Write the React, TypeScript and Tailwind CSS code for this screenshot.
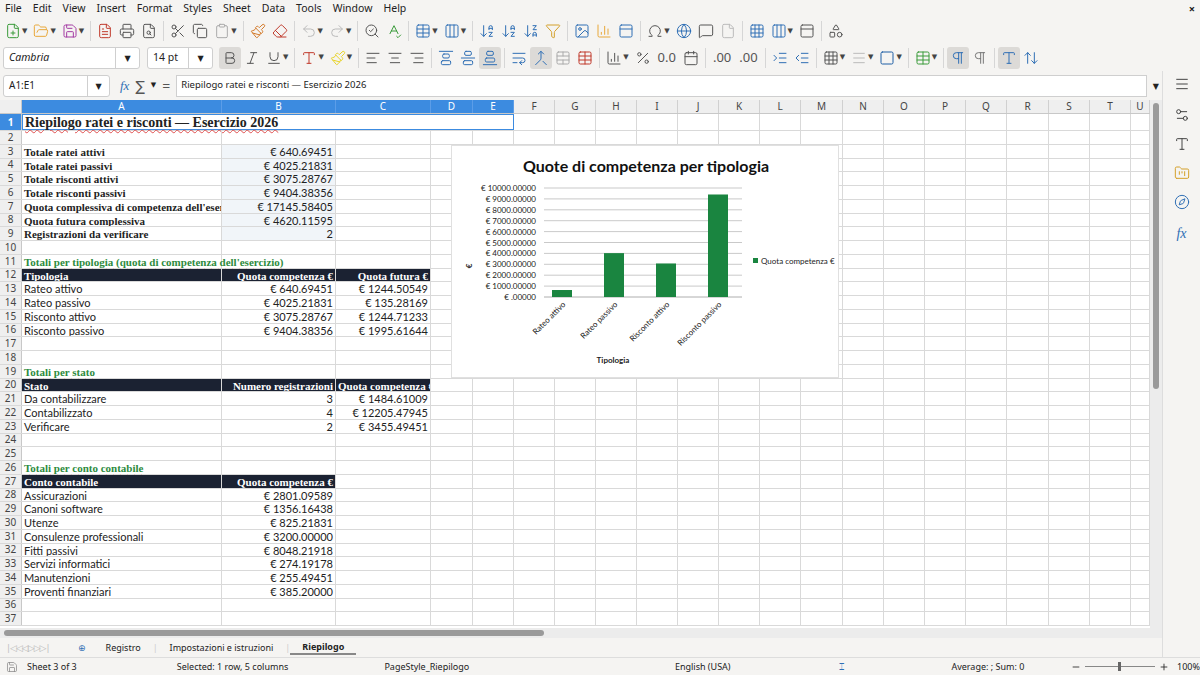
import React from "react";
import {
  FilePlus, FolderOpen, Save, FileText, Printer, FileSearch, Scissors, Copy, Clipboard, Paintbrush, Eraser,
  Undo2, Redo2, SearchCheck, SpellCheck, Table, Columns3, ArrowDownAZ, ArrowDownZA, Filter, Image, BarChart3,
  Omega, Globe, MessageSquare, File, Grid3x3, PanelTop, Shapes, Bold, Italic, Underline,
  AlignLeft, AlignCenter, AlignRight, AlignVerticalJustifyStart, AlignVerticalJustifyCenter, AlignVerticalJustifyEnd,
  WrapText, Merge, TableCellsMerge, Percent, Calendar, IndentIncrease, IndentDecrease, Square, Menu, Settings2,
  Type, FolderKanban, Compass, Minus, Plus, Pilcrow, ArrowUpDown,
} from "lucide-react";

const cols = [
  ["A", 200], ["B", 114], ["C", 95], ["D", 42], ["E", 41], ["F", 41], ["G", 41], ["H", 41], ["I", 41], ["J", 41],
  ["K", 41], ["L", 41], ["M", 42], ["N", 41], ["O", 41], ["P", 41], ["Q", 41], ["R", 42], ["S", 41], ["T", 41], ["U", 19],
] as const;

type Row = { a?: string; b?: string; c?: string; kind?: "label" | "green" | "head" | "data"; span?: number };

const rows: Record<number, Row> = {
  3: { a: "Totale ratei attivi", b: "€ 640.69451", kind: "label" },
  4: { a: "Totale ratei passivi", b: "€ 4025.21831", kind: "label" },
  5: { a: "Totale risconti attivi", b: "€ 3075.28767", kind: "label" },
  6: { a: "Totale risconti passivi", b: "€ 9404.38356", kind: "label" },
  7: { a: "Quota complessiva di competenza dell'esercizio", b: "€ 17145.58405", kind: "label" },
  8: { a: "Quota futura complessiva", b: "€ 4620.11595", kind: "label" },
  9: { a: "Registrazioni da verificare", b: "2", kind: "label" },
  11: { a: "Totali per tipologia (quota di competenza dell'esercizio)", kind: "green" },
  12: { a: "Tipologia", b: "Quota competenza €", c: "Quota futura €", kind: "head", span: 3 },
  13: { a: "Rateo attivo", b: "€ 640.69451", c: "€ 1244.50549", kind: "data" },
  14: { a: "Rateo passivo", b: "€ 4025.21831", c: "€ 135.28169", kind: "data" },
  15: { a: "Risconto attivo", b: "€ 3075.28767", c: "€ 1244.71233", kind: "data" },
  16: { a: "Risconto passivo", b: "€ 9404.38356", c: "€ 1995.61644", kind: "data" },
  19: { a: "Totali per stato", kind: "green" },
  20: { a: "Stato", b: "Numero registrazioni", c: "Quota competenza €", kind: "head", span: 3 },
  21: { a: "Da contabilizzare", b: "3", c: "€ 1484.61009", kind: "data" },
  22: { a: "Contabilizzato", b: "4", c: "€ 12205.47945", kind: "data" },
  23: { a: "Verificare", b: "2", c: "€ 3455.49451", kind: "data" },
  26: { a: "Totali per conto contabile", kind: "green" },
  27: { a: "Conto contabile", b: "Quota competenza €", kind: "head", span: 2 },
  28: { a: "Assicurazioni", b: "€ 2801.09589", kind: "data" },
  29: { a: "Canoni software", b: "€ 1356.16438", kind: "data" },
  30: { a: "Utenze", b: "€ 825.21831", kind: "data" },
  31: { a: "Consulenze professionali", b: "€ 3200.00000", kind: "data" },
  32: { a: "Fitti passivi", b: "€ 8048.21918", kind: "data" },
  33: { a: "Servizi informatici", b: "€ 274.19178", kind: "data" },
  34: { a: "Manutenzioni", b: "€ 255.49451", kind: "data" },
  35: { a: "Proventi finanziari", b: "€ 385.20000", kind: "data" },
};

const serif = { fontFamily: "'Liberation Serif', serif" };
const sans = { fontFamily: "Lato, 'Liberation Sans', sans-serif" };
const ui = { fontFamily: "'Noto Sans', 'DejaVu Sans', sans-serif" };
const wavy = "underline decoration-wavy decoration-[#e05050] decoration-[0.5px] underline-offset-[2px]";

function I({ icon: C, c = "text-[#555]", dd }: { icon: any; c?: string; dd?: boolean }) {
  return (
    <span className="flex items-center gap-[1px] px-[3px]">
      <C size={16} strokeWidth={1.5} className={c} />
      {dd && <span className="text-[7px] text-[#444]">▼</span>}
    </span>
  );
}
const Sep = () => <span className="mx-[3px] h-[20px] w-px bg-[#d6d6d6]" />;

function Cell({ w, children, right, cls = "" }: { w: number; children?: React.ReactNode; right?: boolean; cls?: string }) {
  return (
    <div
      className={`h-full shrink-0 overflow-hidden whitespace-nowrap border-r border-[#d9d9d9] px-[2px] leading-[13px] ${right ? "text-right" : ""} ${cls}`}
      style={{ width: w }}
    >
      {children}
    </div>
  );
}

function SheetRow({ n }: { n: number }) {
  const r = rows[n];
  const h = n === 1 ? 17 : 13.75;
  const kind = r?.kind;
  const headBg = (i: number) => (kind === "head" && i < (r?.span ?? 0) ? "bg-[#1b2232] text-white font-bold" : "");
  const aCls =
    kind === "label" ? `font-bold text-[#222] ${wavy}` :
    kind === "green" ? `font-bold text-[#2e8b3e] overflow-visible ${wavy}` :
    kind === "data" ? `text-[#222] ${wavy}` : "";
  return (
    <div className="flex shrink-0 border-b border-[#d9d9d9] text-[11px]" style={{ height: h }}>
      <div className={`flex w-[22px] shrink-0 items-center justify-center border-r border-[#c8c8c8] text-[10px] ${n === 1 ? "bg-[#3c8be0] font-bold text-white" : "bg-[#efefef] text-[#444]"}`} style={ui}>
        {n}
      </div>
      {n === 1 ? (
        <div className={`h-full shrink-0 border-[1.5px] border-[#3c8be0] px-[2px] text-[14px] font-bold leading-[15px] text-[#222] ${wavy}`} style={{ ...serif, width: 492 }}>
          Riepilogo ratei e risconti — Esercizio 2026
        </div>
      ) : (
        <>
          <Cell w={200} cls={`${aCls} ${headBg(0)}`}><span style={kind === "data" ? sans : serif}>{r?.a}</span></Cell>
          <Cell w={114} right cls={`${kind === "label" ? "bg-[#f1f5f9]" : ""} ${headBg(1)} ${kind === "head" ? "text-left" : ""}`}><span style={kind === "head" ? serif : sans}>{r?.b}</span></Cell>
          <Cell w={95} right cls={`${headBg(2)} ${kind === "head" ? "text-left" : ""}`}><span style={kind === "head" ? serif : sans}>{r?.c}</span></Cell>
          <Cell w={42} />
          <Cell w={41} />
        </>
      )}
      {cols.slice(5).map(([k, w]) => <Cell key={k} w={w} />)}
    </div>
  );
}

function Chart() {
  const vals = [640.69, 4025.22, 3075.29, 9404.38];
  const names = ["Rateo attivo", "Rateo passivo", "Risconto attivo", "Risconto passivo"];
  const top = 42, bot = 151, left = 92, right = 290;
  return (
    <div className="absolute left-[451px] top-[45px] h-[233px] w-[388px] border border-[#e0e0e0] bg-white">
      <svg width="388" height="233" style={{ fontFamily: "Lato, 'Liberation Sans', sans-serif" }}>
        <text x="194" y="26" textAnchor="middle" fontSize="16" fontWeight="bold" fill="#111">Quote di competenza per tipologia</text>
        {Array.from({ length: 11 }).map((_, i) => {
          const y = bot - (i * (bot - top)) / 10;
          return (
            <g key={i}>
              <line x1={left} x2={right} y1={y} y2={y} stroke={i === 0 ? "#999" : "#bbb"} strokeWidth="0.8" />
              <text x={left - 8} y={y + 3} textAnchor="end" fontSize="8" fill="#222">€ {i === 0 ? "" : i * 1000}.00000</text>
            </g>
          );
        })}
        {vals.map((v, i) => {
          const cx = 110 + i * 52;
          const h = (v / 10000) * (bot - top);
          return (
            <g key={i}>
              <rect x={cx - 10} y={bot - h} width="20" height={h} fill="#1a8540" />
              <text transform={`translate(${cx + 4},${bot + 8}) rotate(-45)`} textAnchor="end" fontSize="8" fill="#222">{names[i]}</text>
            </g>
          );
        })}
        <text x="161" y="217" textAnchor="middle" fontSize="8" fontWeight="bold" fill="#222">Tipologia</text>
        <text transform="translate(20,120) rotate(-90)" textAnchor="middle" fontSize="8" fontWeight="bold" fill="#222">€</text>
        <rect x="301" y="112" width="5" height="5" fill="#1a8540" />
        <text x="309" y="118" fontSize="8" fill="#222">Quota competenza €</text>
      </svg>
    </div>
  );
}

export default function App() {
  const rowNums = Array.from({ length: 37 }, (_, i) => i + 1);
  return (
    <div className="flex h-[675px] w-[1200px] flex-col overflow-hidden bg-[#f5f4f2] text-[#222]" style={ui}>
      {/* menu */}
      <div className="flex h-[18px] items-center gap-[11px] px-[5px] text-[10.5px]">
        {["File", "Edit", "View", "Insert", "Format", "Styles", "Sheet", "Data", "Tools", "Window", "Help"].map((m) => <span key={m}>{m}</span>)}
        <span className="ml-auto text-[11px] font-bold">×</span>
      </div>
      {/* toolbar 1 */}
      <div className="flex h-[26px] items-center px-[2px]">
        <I icon={FilePlus} c="text-[#3a9b3a]" dd /><I icon={FolderOpen} c="text-[#e8a83a]" dd /><I icon={Save} c="text-[#a33aa3]" dd /><Sep />
        <I icon={FileText} c="text-[#c0392b]" /><I icon={Printer} /><I icon={FileSearch} /><Sep />
        <I icon={Scissors} /><I icon={Copy} /><I icon={Clipboard} c="text-[#aaa]" dd /><Sep />
        <I icon={Paintbrush} c="text-[#d47a2a]" /><I icon={Eraser} c="text-[#c0392b]" /><Sep />
        <I icon={Undo2} c="text-[#bbb]" dd /><I icon={Redo2} c="text-[#bbb]" dd /><Sep />
        <I icon={SearchCheck} /><I icon={SpellCheck} c="text-[#3a9b3a]" /><Sep />
        <I icon={Table} c="text-[#2f6fb5]" dd /><I icon={Columns3} c="text-[#2f6fb5]" dd /><Sep />
        <I icon={ArrowDownAZ} c="text-[#2f6fb5]" /><I icon={ArrowDownAZ} c="text-[#2f6fb5]" /><I icon={ArrowDownZA} c="text-[#2f6fb5]" /><I icon={Filter} c="text-[#d4a02a]" /><Sep />
        <I icon={Image} c="text-[#2f6fb5]" /><I icon={BarChart3} c="text-[#e8a83a]" /><I icon={PanelTop} c="text-[#2f6fb5]" /><Sep />
        <I icon={Omega} dd /><I icon={Globe} c="text-[#2f6fb5]" /><I icon={MessageSquare} /><I icon={File} c="text-[#bbb]" /><Sep />
        <I icon={Grid3x3} c="text-[#2f6fb5]" /><I icon={Columns3} c="text-[#2f6fb5]" dd /><I icon={PanelTop} /><Sep /><I icon={Shapes} />
      </div>
      {/* toolbar 2 */}
      <div className="flex h-[27px] items-center px-[3px]">
        <div className="flex h-[22px] w-[137px] items-center rounded-[3px] border border-[#cfcfcf] bg-white text-[10.5px]">
          <span className="flex-1 px-[5px] italic">Cambria</span>
          <span className="flex h-full w-[24px] items-center justify-center border-l border-[#cfcfcf] text-[8px]">▼</span>
        </div>
        <div className="ml-[7px] flex h-[22px] w-[66px] items-center rounded-[3px] border border-[#cfcfcf] bg-white text-[10.5px]">
          <span className="flex-1 px-[5px]">14 pt</span>
          <span className="flex h-full w-[24px] items-center justify-center border-l border-[#cfcfcf] text-[8px]">▼</span>
        </div>
        <span className="ml-[6px] flex h-[22px] items-center rounded-[3px] bg-[#dcdad7]"><I icon={Bold} /></span>
        <I icon={Italic} /><I icon={Underline} dd /><Sep />
        <I icon={Type} c="text-[#c0392b]" dd /><I icon={Paintbrush} c="text-[#e8d42a]" dd /><Sep />
        <I icon={AlignLeft} /><I icon={AlignCenter} /><I icon={AlignRight} /><Sep />
        <I icon={AlignVerticalJustifyStart} c="text-[#2f6fb5]" /><I icon={AlignVerticalJustifyCenter} c="text-[#2f6fb5]" />
        <span className="flex h-[22px] items-center rounded-[3px] bg-[#dcdad7]"><I icon={AlignVerticalJustifyEnd} c="text-[#2f6fb5]" /></span><Sep />
        <I icon={WrapText} c="text-[#2f6fb5]" />
        <span className="flex h-[22px] items-center rounded-[3px] bg-[#dcdad7]"><I icon={Merge} c="text-[#2f6fb5]" /></span>
        <I icon={TableCellsMerge} c="text-[#aaa]" /><I icon={Table} c="text-[#c0392b]" /><Sep />
        <I icon={BarChart3} dd /><I icon={Percent} /><span className="px-[4px] text-[13px] text-[#555]">0.0</span><I icon={Calendar} /><Sep />
        <span className="px-[4px] text-[13px] text-[#555]">.00</span><span className="px-[4px] text-[13px] text-[#555]">.00</span><Sep />
        <I icon={IndentIncrease} c="text-[#2f6fb5]" /><I icon={IndentDecrease} c="text-[#2f6fb5]" /><Sep />
        <I icon={Grid3x3} dd /><I icon={Menu} c="text-[#bbb]" dd /><I icon={Square} c="text-[#1f5fa5]" dd /><Sep />
        <I icon={Table} c="text-[#3a9b3a]" dd /><Sep />
        <span className="flex h-[22px] items-center rounded-[3px] bg-[#dcdad7]"><I icon={Pilcrow} c="text-[#2f6fb5]" /></span><I icon={Pilcrow} c="text-[#777]" /><Sep />
        <span className="flex h-[22px] items-center rounded-[3px] bg-[#dcdad7]"><I icon={Type} c="text-[#2f6fb5]" /></span><I icon={ArrowUpDown} c="text-[#2f6fb5]" />
      </div>
      {/* formula bar + body */}
      <div className="flex min-h-0 flex-1">
        <div className="flex min-w-0 flex-1 flex-col">
          <div className="flex h-[29px] items-center gap-[6px] px-[3px]">
            <div className="flex h-[22px] w-[107px] items-center rounded-[3px] border border-[#cfcfcf] bg-white text-[10px]">
              <span className="flex-1 px-[5px]">A1:E1</span>
              <span className="flex h-full w-[22px] items-center justify-center border-l border-[#cfcfcf] text-[8px]">▼</span>
            </div>
            <span className="ml-[4px] text-[13px] italic text-[#2f6fb5]" style={serif}>fx</span>
            <span className="text-[14px] text-[#555]">∑</span><span className="text-[7px]">▼</span>
            <span className="text-[14px] text-[#555]">=</span>
            <div className="flex h-[22px] flex-1 items-center border border-[#cfcfcf] bg-white px-[4px] text-[9.5px]">Riepilogo ratei e risconti — Esercizio 2026</div>
            <span className="text-[8px]">▼</span>
          </div>
          <div className="flex min-h-0 flex-1">
            <div className="relative flex min-w-0 flex-1 flex-col overflow-hidden bg-white">
              {/* column headers */}
              <div className="flex h-[14px] shrink-0 border-b border-[#c8c8c8] text-[10px]">
                <div className="w-[22px] shrink-0 border-r border-[#c8c8c8] bg-[#efefef]" />
                {cols.map(([k, w], i) => (
                  <div key={k} className={`flex shrink-0 items-center justify-center border-r ${i < 5 ? "border-[#5b9de8] bg-[#3c8be0] text-white" : "border-[#d0d0d0] bg-[#efefef] text-[#444]"}`} style={{ width: w }}>{k}</div>
                ))}
              </div>
              <div className="flex-1 overflow-hidden">
                {rowNums.map((n) => <SheetRow key={n} n={n} />)}
              </div>
              <Chart />
            </div>
            <div className="flex w-[12px] shrink-0 justify-center bg-[#ececec] pt-[3px]">
              <div className="h-[286px] w-[6px] rounded-full bg-[#9a9a9a]" />
            </div>
          </div>
          <div className="flex h-[10px] items-center bg-[#ececec] px-[4px]">
            <div className="h-[6px] w-[540px] rounded-full bg-[#9a9a9a]" />
          </div>
          <div className="flex h-[19px] items-center text-[9px]">
            <span className="w-[70px] pl-[6px] text-[9px] tracking-[-1px] text-[#bbb]">|◁◁◁▷▷▷|</span>
            <span className="mx-[8px] text-[#2f6fb5]">⊕</span>
            <span className="px-[12px]">Registro</span><span className="text-[#ccc]">|</span>
            <span className="px-[12px]">Impostazioni e istruzioni</span><span className="text-[#ccc]">|</span>
            <span className="border-b-2 border-[#888] px-[12px] font-bold">Riepilogo</span>
          </div>
        </div>
        {/* sidebar */}
        <div className="flex w-[38px] flex-col items-center gap-[13px] border-l border-[#ddd] pt-[5px]">
          <Menu size={16} strokeWidth={1.5} className="text-[#444]" />
          <Settings2 size={16} strokeWidth={1.5} className="mt-[2px] text-[#444]" />
          <Type size={16} strokeWidth={1.5} className="text-[#444]" />
          <FolderKanban size={16} strokeWidth={1.5} className="text-[#d4a02a]" />
          <Compass size={16} strokeWidth={1.5} className="text-[#2f6fb5]" />
          <span className="text-[14px] italic text-[#2f6fb5]" style={serif}>fx</span>
        </div>
      </div>
      {/* status bar */}
      <div className="relative flex h-[18px] items-center border-t border-[#ddd] text-[9px]">
        <Save size={12} strokeWidth={1.5} className="ml-[6px] text-[#888]" />
        <span className="ml-[9px] w-[150px]">Sheet 3 of 3</span>
        <span className="w-[208px]">Selected: 1 row, 5 columns</span>
        <span className="w-[291px]">PageStyle_Riepilogo</span>
        <span className="w-[164px]">English (USA)</span>
        <span className="w-[113px] text-[#2f6fb5]">⌶</span>
        <span className="w-[120px]">Average: ; Sum: 0</span>
        <Minus size={10} />
        <div className="relative mx-[4px] h-[1px] w-[70px] bg-[#888]"><div className="absolute left-[33px] top-[-4px] h-[9px] w-[3px] bg-[#666]" /></div>
        <Plus size={10} />
        <span className="ml-[8px]">100%</span>
      </div>
    </div>
  );
}
